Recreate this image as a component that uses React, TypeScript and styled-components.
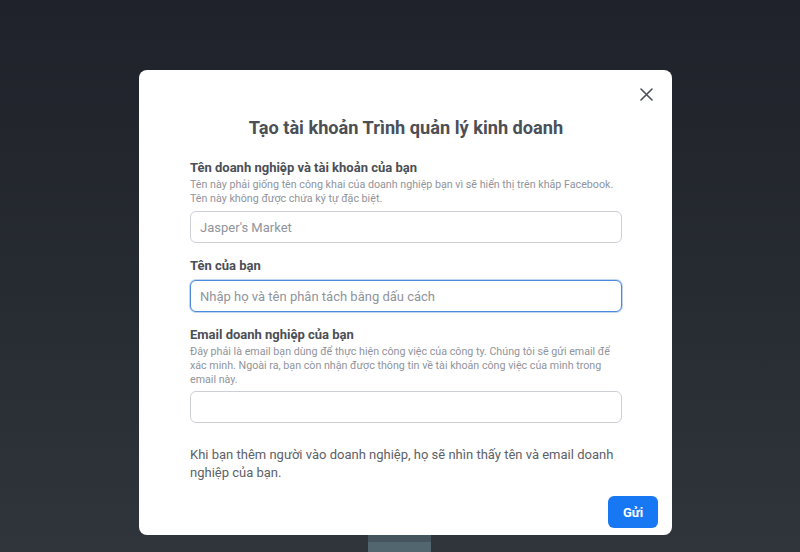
import React from 'react'
import styled, { createGlobalStyle } from 'styled-components'

const GlobalStyle = createGlobalStyle`
  html, body {
    margin: 0;
    padding: 0;
    height: 100%;
  }
  body {
    font-family: Roboto, 'Liberation Sans', Arial, sans-serif;
    background: linear-gradient(180deg, #1f222a 0%, #262a31 50%, #30353c 100%);
    overflow: hidden;
  }
`

const Page = styled.div`
  width: 800px;
  height: 552px;
  display: flex;
  flex-direction: column;
  align-items: center;
  padding-top: 70px;
  box-sizing: border-box;
`

const Modal = styled.div`
  position: relative;
  width: 533px;
  height: 465px;
  margin-left: 11px;
  background: #fff;
  border-radius: 8px;
  box-sizing: border-box;
  padding: 47px 50px 0 51px;
  display: flex;
  flex-direction: column;
`

const Stand = styled.div`
  width: 63px;
  flex: 1;
  margin-left: -2px;
  background: linear-gradient(180deg, #45555e 0%, #45555e 40%, #52666f 40%, #52666f 100%);
`

const CloseButton = styled.button`
  position: absolute;
  top: 16px;
  right: 18px;
  width: 16px;
  height: 16px;
  padding: 0;
  border: 0;
  background: none;
  cursor: pointer;
  display: flex;
  align-items: center;
  justify-content: center;
`

const Title = styled.h2`
  margin: 0 0 21px;
  text-align: center;
  font-size: 18.2px;
  line-height: 22px;
  font-weight: 700;
  color: #4b4f56;
`

const Field = styled.div<{ $gap: number }>`
  display: flex;
  flex-direction: column;
  margin-bottom: ${(p) => p.$gap}px;
`

const Label = styled.label`
  font-size: 13px;
  line-height: 16px;
  font-weight: 700;
  color: #4b4f56;
`

const Hint = styled.div`
  margin-top: 2px;
  font-size: 10.7px;
  line-height: 14px;
  color: #90949c;
`

const Input = styled.input<{ $focused?: boolean; $top: number }>`
  margin-top: ${(p) => p.$top}px;
  height: 32px;
  box-sizing: border-box;
  border: 1px solid ${(p) => (p.$focused ? '#4a89dc' : '#ccd0d5')};
  box-shadow: ${(p) => (p.$focused ? '0 0 0 1px rgba(74,137,220,0.35)' : 'none')};
  border-radius: 6px;
  padding: 0 9px;
  font-family: inherit;
  font-size: 13px;
  color: #1c1e21;
  outline: none;

  &::placeholder {
    color: #90949c;
  }
`

const Note = styled.p`
  margin: 0;
  font-size: 13px;
  line-height: 18px;
  color: #5d6168;
`

const Footer = styled.div`
  margin-top: auto;
  margin-right: -36px;
  margin-bottom: 7px;
  display: flex;
  justify-content: flex-end;
`

const SendButton = styled.button`
  width: 50px;
  height: 32px;
  border: 0;
  border-radius: 6px;
  background: #1877f2;
  color: #fff;
  font-family: inherit;
  font-size: 13px;
  font-weight: 700;
  cursor: pointer;
`

const App = () => {
  return (
    <>
      <GlobalStyle />
      <Page>
        <Modal>
          <CloseButton aria-label="Đóng">
            <svg width="13" height="13" viewBox="0 0 13 13">
              <path d="M1 1L12 12M12 1L1 12" stroke="#4b4f56" strokeWidth="1.6" strokeLinecap="round" />
            </svg>
          </CloseButton>
          <Title>Tạo tài khoản Trình quản lý kinh doanh</Title>

          <Field $gap={15}>
            <Label>Tên doanh nghiệp và tài khoản của bạn</Label>
            <Hint>
              Tên này phải giống tên công khai của doanh nghiệp bạn vì sẽ hiển thị trên khắp Facebook.
              <br />
              Tên này không được chứa ký tự đặc biệt.
            </Hint>
            <Input $top={5} placeholder="Jasper's Market" />
          </Field>

          <Field $gap={15}>
            <Label>Tên của bạn</Label>
            <Input $top={6} $focused placeholder="Nhập họ và tên phân tách bằng dấu cách" />
          </Field>

          <Field $gap={23}>
            <Label>Email doanh nghiệp của bạn</Label>
            <Hint>
              Đây phải là email bạn dùng để thực hiện công việc của công ty. Chúng tôi sẽ gửi email để
              xác minh. Ngoài ra, bạn còn nhận được thông tin về tài khoản công việc của mình trong
              email này.
            </Hint>
            <Input $top={4} />
          </Field>

          <Note>
            Khi bạn thêm người vào doanh nghiệp, họ sẽ nhìn thấy tên và email doanh nghiệp của bạn.
          </Note>

          <Footer>
            <SendButton>Gửi</SendButton>
          </Footer>
        </Modal>
        <Stand />
      </Page>
    </>
  )
}

export default App
